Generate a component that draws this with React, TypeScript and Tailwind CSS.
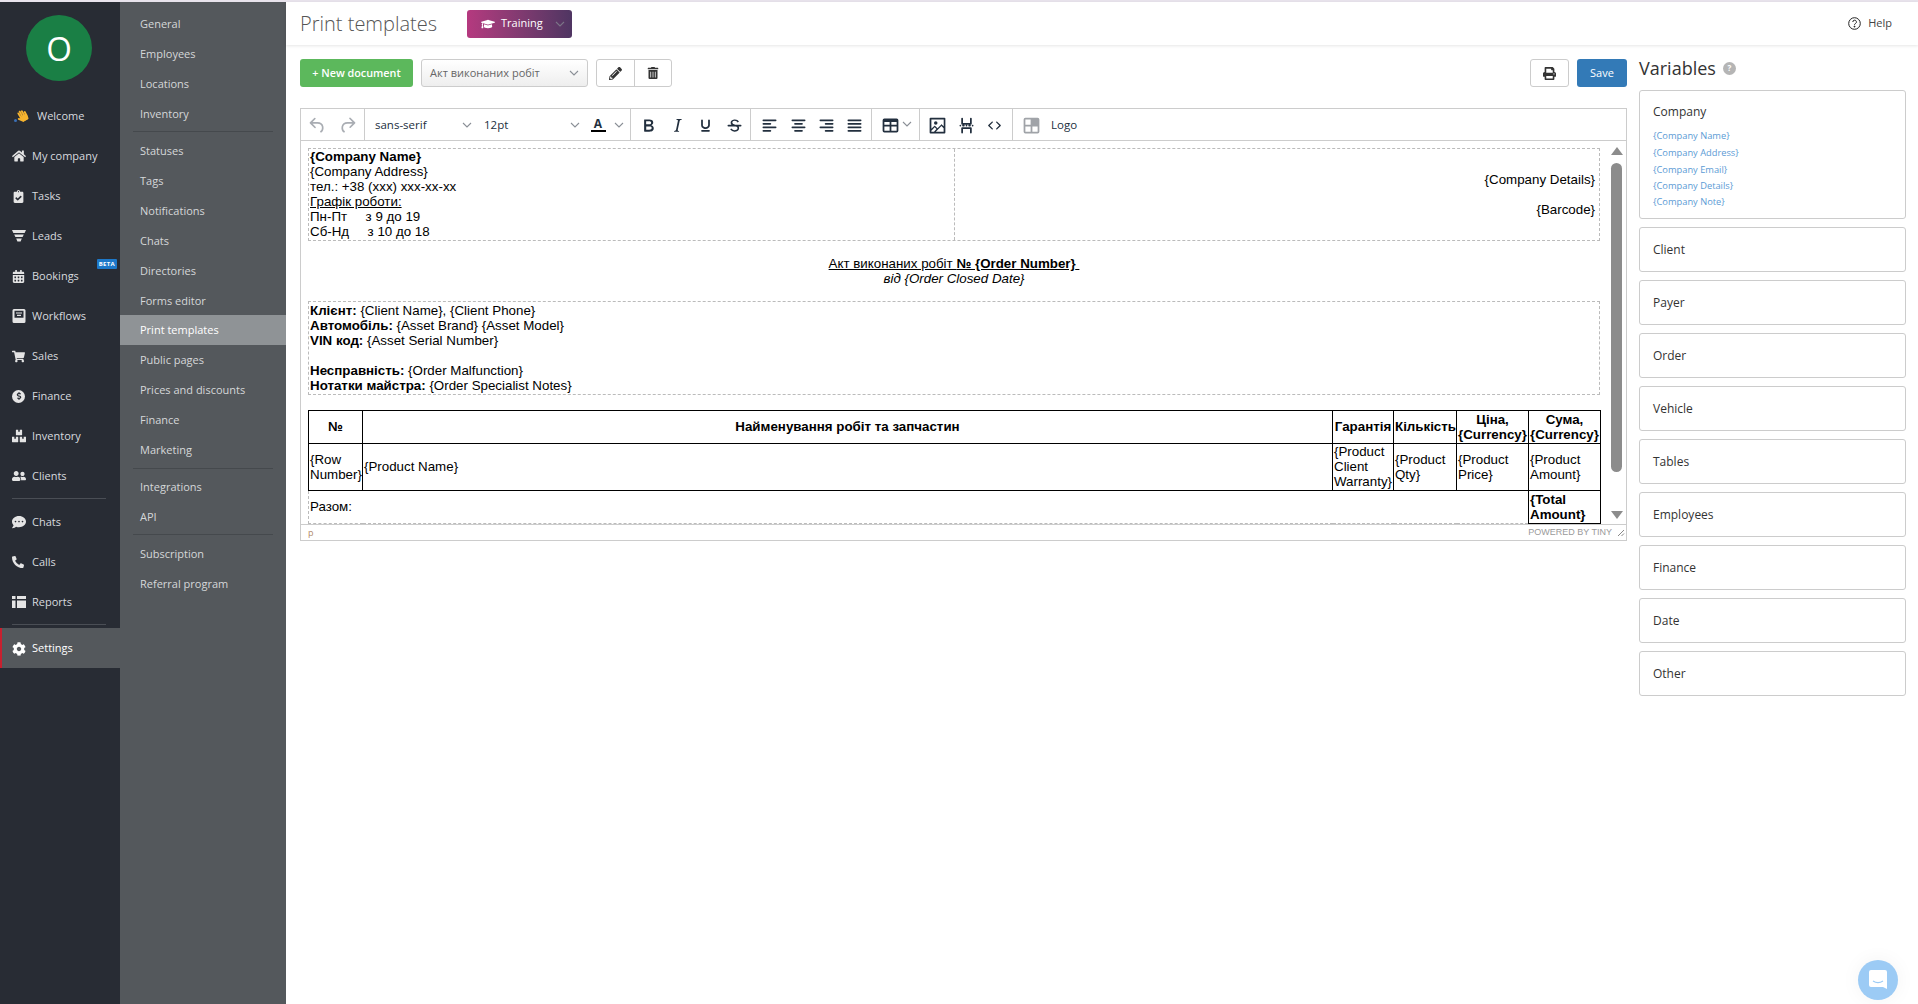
import React from "react";
import {
  FaHome, FaClipboardCheck, FaCalendarAlt, FaShoppingCart, FaDollarSign, FaBoxes, FaUserFriends,
  FaCommentDots, FaPhoneAlt, FaCog, FaPrint, FaPencilAlt, FaTrashAlt, FaGraduationCap, FaHandPaper,
} from "react-icons/fa";

const Funnel = () => (
  <svg width="14" height="14" viewBox="0 0 14 14" fill="currentColor"><path d="M0 1h14l-1.4 3H1.4zM2.2 5.6h9.6L10.6 8H3.4zM4.2 9.6h5.6L8.6 12.6H5.4z" /></svg>
);
const Workflow = () => (
  <svg width="14" height="14" viewBox="0 0 14 14" fill="currentColor"><path fillRule="evenodd" d="M2 0h10a1.5 1.5 0 0 1 1.5 1.5v11A1.5 1.5 0 0 1 12 14H2a1.5 1.5 0 0 1-1.5-1.5v-11A1.5 1.5 0 0 1 2 0zm.5 1.8v7h9v-7zM4 3.4h6v1.2H4zm1 2.3h4v1.2H5z" /></svg>
);
const Reports = () => (
  <svg width="14" height="14" viewBox="0 0 14 14" fill="currentColor"><path d="M0 1h3.5v3H0zM5 1h9v3H5zM0 5.5h3.5V13H0zM5 5.5h9V13H5z" /></svg>
);
const DollarCircle = () => (
  <span className="flex h-[13px] w-[13px] items-center justify-center rounded-full bg-[#e6e6e6] text-[#282c34]"><FaDollarSign size={8} /></span>
);

const mainNav: [string, React.ReactNode][] = [
  ["My company", <FaHome size={14} />],
  ["Tasks", <FaClipboardCheck size={13} />],
  ["Leads", <Funnel />],
  ["Bookings", <FaCalendarAlt size={13} />],
  ["Workflows", <Workflow />],
  ["Sales", <FaShoppingCart size={13} />],
  ["Finance", <DollarCircle />],
  ["Inventory", <FaBoxes size={14} />],
  ["Clients", <FaUserFriends size={14} />],
];

function MainRow({ label, icon, beta }: { label: string; icon: React.ReactNode; beta?: boolean }) {
  return (
    <div className="relative flex h-10 items-center pl-3 text-[#d7dadf]">
      <span className="flex w-[20px] shrink-0 items-center text-[#e4e4e4]">{icon}</span>
      <span>{label}</span>
      {beta && (
        <span className="absolute right-[3px] top-[3px] rounded-[1px] bg-[#1d78c9] px-[2px] text-[6px] font-bold leading-[10px] tracking-[0.3px] text-white">BETA</span>
      )}
    </div>
  );
}

function SubRow({ label, active }: { label: string; active?: boolean }) {
  return (
    <div className={active ? "-mt-px flex h-[30px] items-center bg-[#8f9396] pl-5 text-white" : "flex h-[30px] items-center pl-5 text-[#d5d7d9]"}>{label}</div>
  );
}
const SubDivider = ({ cls }: { cls: string }) => <div className={"mx-[13px] h-px bg-[#45494d] " + cls} />;

const I = ({ d, size = 21, cls = "text-[#222f3e]" }: { d: string; size?: number; cls?: string }) => (
  <svg width={size} height={size} viewBox="0 0 24 24" fill="currentColor" className={cls}><path d={d} /></svg>
);
const Chev = ({ cls = "" }: { cls?: string }) => (
  <svg width="10" height="10" viewBox="0 0 10 10" fill="none" stroke="#8a8f96" strokeWidth="1.1" className={cls}><path d="M1 3l4 4 4-4" /></svg>
);
const Sep = () => <div className="h-full w-px shrink-0 bg-[#ccc]" />;

const P = {
  undo: "M6.4 8H12c3.7 0 6.2 2 6.8 5.1.6 2.7-.4 5.6-2.3 6.8a1 1 0 0 1-1-1.8c1.1-.6 1.8-2.7 1.4-4.6-.5-2.1-2.1-3.5-4.9-3.5H6.4l3.3 3.3a1 1 0 1 1-1.4 1.4l-5-5a1 1 0 0 1 0-1.4l5-5a1 1 0 0 1 1.4 1.4L6.4 8z",
  redo: "M17.6 10H12c-2.8 0-4.4 1.4-4.9 3.5-.4 2 .3 4 1.4 4.6a1 1 0 1 1-1 1.8c-2-1.2-2.9-4.1-2.3-6.8.6-3 3-5.1 6.8-5.1h5.6l-3.3-3.3a1 1 0 1 1 1.4-1.4l5 5a1 1 0 0 1 0 1.4l-5 5a1 1 0 0 1-1.4-1.4l3.3-3.3z",
  bold: "M7.8 19c-.3 0-.5 0-.6-.2l-.2-.5V5.7c0-.2 0-.4.2-.5l.6-.2h5c1.5 0 2.7.3 3.5 1 .7.6 1.1 1.4 1.1 2.5a3 3 0 0 1-.6 1.9c-.4.6-1 1-1.6 1.2.4.1.9.3 1.3.6s.8.7 1 1.2c.4.4.5 1 .5 1.6 0 1.3-.4 2.3-1.3 3-.8.7-2.1 1-3.8 1H7.8zm5-8.3c.6 0 1.2-.1 1.6-.5.4-.3.6-.7.6-1.3 0-1.1-.8-1.7-2.3-1.7H9.3v3.5h3.4zm.5 6c.7 0 1.3-.1 1.7-.4.4-.4.6-.9.6-1.5s-.2-1-.7-1.4c-.4-.3-1-.4-2-.4H9.4v3.8h4z",
  italic: "M16.7 4.7l-.1.9h-.3c-.6 0-1 0-1.4.3-.3.3-.4.6-.5 1.1l-2.1 9.8v.6c0 .5.4.8 1.4.8h.2l-.2.8H8l.2-.8h.2c1.1 0 1.8-.5 2-1.5l2-9.8.1-.5c0-.6-.4-.8-1.4-.8h-.3l.2-.9h5.8z",
  underline: "M16 5c.6 0 1 .4 1 1v5.5a4 4 0 0 1-.4 1.8l-1 1.4a5.3 5.3 0 0 1-5.5 1 5 5 0 0 1-1.6-1c-.5-.4-.8-.9-1.1-1.4a4 4 0 0 1-.4-1.8V6c0-.6.4-1 1-1s1 .4 1 1v5.5c0 .3 0 .6.2 1l.6.7a3.3 3.3 0 0 0 2.2.8 3.4 3.4 0 0 0 2.2-.8c.3-.2.4-.5.6-.8l.2-.9V6c0-.6.4-1 1-1zM8 17h8c.6 0 1 .4 1 1s-.4 1-1 1H8a1 1 0 0 1 0-2z",
  strike: "M15.6 8.5c-.5-.7-1-1.1-1.3-1.3-.6-.4-1.3-.6-2-.6-2.7 0-2.8 1.7-2.8 2.1 0 1.6 1.8 2 3.2 2.3 4.4.9 4.6 2.8 4.6 3.9 0 1.4-.7 4.1-5 4.1A6.2 6.2 0 0 1 7 16.4l1.5-1.1c.4.6 1.6 2 3.7 2 1.6 0 2.5-.4 3-1.2.4-.8.3-2-.8-2.6-.7-.4-1.6-.7-2.9-1-1-.2-3.9-.8-3.9-3.6C7.6 6 10.3 5 12.4 5c2.9 0 4.2 1.6 4.7 2.4l-1.5 1.1zM5 11h14a1 1 0 0 1 0 2H5a1 1 0 0 1 0-2z",
  left: "M5 5h14c.6 0 1 .4 1 1s-.4 1-1 1H5a1 1 0 1 1 0-2zm0 4h8c.6 0 1 .4 1 1s-.4 1-1 1H5a1 1 0 1 1 0-2zm0 8h8c.6 0 1 .4 1 1s-.4 1-1 1H5a1 1 0 0 1 0-2zm0-4h14c.6 0 1 .4 1 1s-.4 1-1 1H5a1 1 0 0 1 0-2z",
  center: "M5 5h14c.6 0 1 .4 1 1s-.4 1-1 1H5a1 1 0 1 1 0-2zm3 4h8c.6 0 1 .4 1 1s-.4 1-1 1H8a1 1 0 1 1 0-2zm0 8h8c.6 0 1 .4 1 1s-.4 1-1 1H8a1 1 0 0 1 0-2zm-3-4h14c.6 0 1 .4 1 1s-.4 1-1 1H5a1 1 0 0 1 0-2z",
  right: "M5 5h14c.6 0 1 .4 1 1s-.4 1-1 1H5a1 1 0 1 1 0-2zm6 4h8c.6 0 1 .4 1 1s-.4 1-1 1h-8a1 1 0 0 1 0-2zm0 8h8c.6 0 1 .4 1 1s-.4 1-1 1h-8a1 1 0 0 1 0-2zm-6-4h14c.6 0 1 .4 1 1s-.4 1-1 1H5a1 1 0 0 1 0-2z",
  justify: "M5 5h14c.6 0 1 .4 1 1s-.4 1-1 1H5a1 1 0 1 1 0-2zm0 4h14c.6 0 1 .4 1 1s-.4 1-1 1H5a1 1 0 1 1 0-2zm0 4h14c.6 0 1 .4 1 1s-.4 1-1 1H5a1 1 0 0 1 0-2zm0 4h14c.6 0 1 .4 1 1s-.4 1-1 1H5a1 1 0 0 1 0-2z",
  table: "M19 4a2 2 0 0 1 2 2v12a2 2 0 0 1-2 2H5a2 2 0 0 1-2-2V6a2 2 0 0 1 2-2h14zm-8 9H5v5h6v-5zm8 0h-6v5h6v-5zM11 8H5v3h6V8zm8 0h-6v3h6V8z",
  image: "M5 15.7l3.3-3.2c.3-.3.7-.3 1 0L12 15l4.1-4c.3-.4.8-.4 1 0l2 1.9V5H5v10.7zM5 18V19h3l2.8-2.9-2-2L5 17.9zm14-3l-2.5-2.4-6.4 6.5H19v-4zM4 3h16c.6 0 1 .4 1 1v16c0 .6-.4 1-1 1H4a1 1 0 0 1-1-1V4c0-.6.4-1 1-1zm6 8a2 2 0 1 0 0-4 2 2 0 0 0 0 4z",
  pagebreak: "M5 11c.6 0 1 .4 1 1s-.4 1-1 1a1 1 0 0 1 0-2zm3 0h1c.6 0 1 .4 1 1s-.4 1-1 1H8a1 1 0 0 1 0-2zm4 0c.6 0 1 .4 1 1s-.4 1-1 1a1 1 0 0 1 0-2zm3 0h1c.6 0 1 .4 1 1s-.4 1-1 1h-1a1 1 0 0 1 0-2zm4 0c.6 0 1 .4 1 1s-.4 1-1 1a1 1 0 0 1 0-2zM7 3c.6 0 1 .4 1 1v5h8V4c0-.6.4-1 1-1s1 .4 1 1v6c0 .6-.4 1-1 1H7a1 1 0 0 1-1-1V4c0-.6.4-1 1-1zm0 11h10c.6 0 1 .4 1 1v5c0 .6-.4 1-1 1s-1-.4-1-1v-4H8v4c0 .6-.4 1-1 1s-1-.4-1-1v-5c0-.6.4-1 1-1z",
  code: "M9.8 15.7c.3.3.3.8 0 1-.3.4-.9.4-1.2 0l-4.4-4.1a.8.8 0 0 1 0-1.2l4.4-4.2c.3-.3.9-.3 1.2 0 .3.3.3.8 0 1.1L6 12l3.8 3.7zm4.4 0L18 12l-3.8-3.7a.8.8 0 0 1 0-1.1c.3-.3.9-.3 1.2 0l4.4 4.2c.3.3.3.9 0 1.2l-4.4 4.1c-.3.4-.9.4-1.2 0a.8.8 0 0 1 0-1z",
  tmpl: "M5 3h14a2 2 0 0 1 2 2v14a2 2 0 0 1-2 2H5a2 2 0 0 1-2-2V5a2 2 0 0 1 2-2zm0 2v6h6V5H5zm0 8v6h6v-6H5zm8 0v6h6v-6h-6z",
};

const Tool = ({ w, children }: { w: string; children: React.ReactNode }) => (
  <div className={"flex h-full shrink-0 items-center justify-center " + w}>{children}</div>
);

function EditorToolbar() {
  return (
    <div className="flex h-[32px] items-center border-b border-[#ccc] font-['Open_Sans',sans-serif] text-[11.5px] text-[#222f3e]">
      <div className="flex h-full w-[63px] shrink-0 items-center justify-center gap-[9px] pt-px">
        <I d={P.undo} cls="text-[#a9adb3]" />
        <I d={P.redo} cls="text-[#a9adb3]" />
      </div>
      <Sep />
      <div className="flex h-full w-[117px] shrink-0 items-center justify-between pl-[10px] pr-[10px] pt-px"><span>sans-serif</span><Chev /></div>
      <div className="flex h-full w-[98px] shrink-0 items-center justify-between pt-px"><span className="pl-[2px]">12pt</span><Chev /></div>
      <div className="flex h-full w-[50px] shrink-0 items-center pt-px">
        <span className="ml-[7px] flex w-[22px] flex-col items-center"><span className="text-[12px] font-bold leading-[11px]">A</span><span className="mt-px h-[2px] w-[15px] bg-black" /></span>
        <Chev cls="ml-[5px]" />
      </div>
      <Sep />
      <Tool w="w-[33px] pl-[2px] pt-px"><I d={P.bold} /></Tool>
      <Tool w="w-[27px] pt-px"><I d={P.italic} /></Tool>
      <Tool w="w-[29px] pt-px"><I d={P.underline} /></Tool>
      <Tool w="w-[28px] pt-px"><I d={P.strike} /></Tool>
      <div className="w-[2px]" />
      <Sep />
      <Tool w="w-[33px] pl-[3px] pt-px"><I d={P.left} /></Tool>
      <Tool w="w-[28px] pt-px"><I d={P.center} /></Tool>
      <Tool w="w-[28px] pt-px"><I d={P.right} /></Tool>
      <Tool w="w-[28px] pt-px"><I d={P.justify} /></Tool>
      <div className="w-[3px]" />
      <Sep />
      <div className="flex h-full w-[47px] shrink-0 items-center pl-[8px] pt-px"><I d={P.table} /><Chev cls="-mt-[3px] ml-[1px]" /></div>
      <Sep />
      <Tool w="w-[32px] pl-[2px] pt-px"><I d={P.image} /></Tool>
      <Tool w="w-[28px] pt-px"><I d={P.pagebreak} /></Tool>
      <Tool w="w-[29px] pt-px"><I d={P.code} size={19} /></Tool>
      <div className="w-[3px]" />
      <Sep />
      <Tool w="w-[36px] pt-px"><I d={P.tmpl} cls="text-[#a0a3a8]" /></Tool>
      <span className="ml-[2px] pt-px">Logo</span>
    </div>
  );
}

const cell = "border border-black px-px pb-px pt-0 align-middle";

function EditorBody() {
  return (
    <div className="h-[383px] flex-1 overflow-hidden pl-[7px] pt-[7px] font-['Liberation_Sans',Arial,sans-serif] text-[13.33px] leading-[15px] text-black">
      <div className="flex h-[93px] w-[1292px] border border-dashed border-[#bbb]">
        <div className="w-[646px] border-r border-dashed border-[#bbb] pl-px">
          <div className="font-bold">{"{Company Name}"}</div>
          <div>{"{Company Address}"}</div>
          <div>тел.: +38 (xxx) xxx-xx-xx</div>
          <div className="underline">Графік роботи:</div>
          <div>Пн-Пт &nbsp;&nbsp;&nbsp;&nbsp;з 9 до 19</div>
          <div>Сб-Нд &nbsp;&nbsp;&nbsp;&nbsp;з 10 до 18</div>
        </div>
        <div className="flex flex-1 flex-col items-end pr-1 pt-[23px]">
          <div>{"{Company Details}"}</div>
          <div className="mt-[15px]">{"{Barcode}"}</div>
        </div>
      </div>
      <div className="w-[1292px] pt-[15px] text-center">
        <div className="underline">Акт виконаних робіт <b>№ {"{Order Number}"}</b>&nbsp;</div>
        <div className="italic">від {"{Order Closed Date}"}</div>
      </div>
      <div className="mt-[15px] h-[94px] w-[1292px] border border-dashed border-[#bbb] py-px pl-px">
        <div><b>Клієнт:</b> {"{Client Name}, {Client Phone}"}</div>
        <div><b>Автомобіль:</b> {"{Asset Brand} {Asset Model}"}</div>
        <div><b>VIN код:</b> {"{Asset Serial Number}"}</div>
        <div className="h-[15px]" />
        <div><b>Несправність:</b> {"{Order Malfunction}"}</div>
        <div><b>Нотатки майстра:</b> {"{Order Specialist Notes}"}</div>
      </div>
      <table className="mt-[15px] w-[1292px] table-fixed border-collapse">
        <colgroup>
          <col className="w-[54px]" /><col className="w-[970px]" /><col className="w-[61px]" /><col className="w-[63px]" /><col className="w-[72px]" /><col className="w-[72px]" />
        </colgroup>
        <tbody>
          <tr className="h-[33px] text-center font-bold">
            <td className={cell}>№</td>
            <td className={cell}>Найменування робіт та запчастин</td>
            <td className={cell}>Гарантія</td>
            <td className={cell + " whitespace-nowrap"}>Кількість</td>
            <td className={cell}>Ціна, {"{Currency}"}</td>
            <td className={cell}>Сума, {"{Currency}"}</td>
          </tr>
          <tr className="h-[47px]">
            <td className={cell}>{"{Row Number}"}</td>
            <td className={cell}>{"{Product Name}"}</td>
            <td className={cell}>{"{Product Client Warranty}"}</td>
            <td className={cell}>{"{Product Qty}"}</td>
            <td className={cell}>{"{Product Price}"}</td>
            <td className={cell}>{"{Product Amount}"}</td>
          </tr>
          <tr className="h-[33px]">
            <td colSpan={5} className="border-x border-b border-dashed border-x-[#bbb] border-b-[#bbb] px-px pb-px pt-0 align-middle">Разом:</td>
            <td className={cell + " font-bold"}>{"{Total Amount}"}</td>
          </tr>
        </tbody>
      </table>
    </div>
  );
}

function Scrollbar() {
  return (
    <div className="flex w-[16px] shrink-0 flex-col items-center pr-[3px] pt-[6px]">
      <div className="h-0 w-0 border-x-[6px] border-b-[8px] border-x-transparent border-b-[#8c8c8c]" />
      <div className="mt-[8px] h-[309px] w-[11px] shrink-0 rounded-[6px] bg-[#8c8c8c]" />
      <div className="mt-[39px] h-0 w-0 border-x-[6px] border-t-[8px] border-x-transparent border-t-[#8c8c8c]" />
    </div>
  );
}

const sections = ["Client", "Payer", "Order", "Vehicle", "Tables", "Employees", "Finance", "Date", "Other"];
const vars = [
  ["{Company Name}", "h-[16px]"],
  ["{Company Address}", "h-[17px]"],
  ["{Company Email}", "h-[17px]"],
  ["{Company Details}", "h-[16px]"],
  ["{Company Note}", "h-[16px]"],
];

export default function App() {
  return (
    <div className="relative flex h-screen w-full flex-col overflow-hidden bg-white font-['Open_Sans',sans-serif] text-[11px] text-[#333]">
      <div className="h-[2px] shrink-0 bg-[#e8e3ec]" />
      <div className="flex min-h-0 flex-1">
        <aside className="flex w-[120px] shrink-0 flex-col bg-[#282c34]">
          <div className="mb-[15px] ml-[26px] mt-[13px] flex h-[66px] w-[66px] items-center justify-center rounded-full bg-[#1a7f45] text-[33px] leading-none text-white">O</div>
          <div className="flex h-10 items-center pl-[15px] text-[#d7dadf]">
            <span className="relative mr-[9px] flex w-[13px] justify-center text-[#f5b32e]"><FaHandPaper size={12} className="-rotate-[30deg]" /><span className="absolute -left-px bottom-0 h-[3px] w-[3px] rounded-full bg-[#3b6fb5]" /></span>
            Welcome
          </div>
          {mainNav.map(([l, ic]) => <MainRow key={l} label={l} icon={ic} beta={l === "Bookings"} />)}
          <div className="mx-3 mb-[3px] mt-[2px] h-px w-[94px] bg-[#4a4e55]" />
          <MainRow label="Chats" icon={<FaCommentDots size={14} />} />
          <MainRow label="Calls" icon={<FaPhoneAlt size={12} />} />
          <MainRow label="Reports" icon={<Reports />} />
          <div className="mx-3 mb-[3px] mt-[2px] h-px w-[94px] bg-[#4a4e55]" />
          <div className="flex h-10 items-center border-l-2 border-[#c8202f] bg-[#54585c] pl-[10px] pt-px text-white">
            <span className="flex w-[20px] shrink-0 text-white"><FaCog size={14} /></span>Settings
          </div>
        </aside>
        <nav className="w-[166px] shrink-0 bg-[#54585c] pt-[7px]">
          {["General", "Employees", "Locations", "Inventory"].map((l) => <SubRow key={l} label={l} />)}
          <SubDivider cls="mb-[4px] mt-[2px]" />
          {["Statuses", "Tags", "Notifications", "Chats", "Directories", "Forms editor"].map((l) => <SubRow key={l} label={l} />)}
          <SubRow label="Print templates" active />
          {["Public pages", "Prices and discounts", "Finance", "Marketing"].map((l) => <SubRow key={l} label={l} />)}
          <SubDivider cls="my-[3px]" />
          {["Integrations", "API"].map((l) => <SubRow key={l} label={l} />)}
          <SubDivider cls="mb-[4px] mt-[2px]" />
          {["Subscription", "Referral program"].map((l) => <SubRow key={l} label={l} />)}
        </nav>
        <main className="flex min-w-0 flex-1 flex-col">
          <header className="flex h-[43px] shrink-0 items-center pl-[14px] pr-[26px] shadow-[0_1px_3px_rgba(0,0,0,0.1)]">
            <h1 className="w-[167px] text-[20px] font-light leading-none text-[#555]">Print templates</h1>
            <div className="flex h-[28px] w-[105px] items-center rounded-[3px] bg-gradient-to-r from-[#b5397f] to-[#4f3562] pl-[14px] text-[11px] font-medium text-white">
              <FaGraduationCap size={14} />
              <span className="ml-[6px]">Training</span>
              <Chev cls="ml-[12px] opacity-70" />
            </div>
            <div className="ml-auto flex items-center gap-[7px] text-[#444]">
              <svg width="13" height="13" viewBox="0 0 13 13" fill="none" stroke="#222" strokeWidth="1"><circle cx="6.5" cy="6.5" r="5.8" /><path d="M4.8 5a1.8 1.8 0 1 1 2.6 1.6c-.6.3-.9.6-.9 1.2" /><circle cx="6.5" cy="9.6" r=".5" fill="#222" /></svg>
              Help
            </div>
          </header>
          <div className="flex min-h-0 flex-1 gap-3 pl-[14px] pr-[12px]">
            <div className="w-[1327px] shrink-0 pt-[14px]">
              <div className="flex h-[28px] items-stretch">
                <div className="flex w-[113px] items-center justify-center rounded-[3px] bg-[#5cb85c] text-[10.8px] font-semibold text-white">+ New document</div>
                <div className="ml-2 flex w-[167px] items-center justify-between rounded-[3px] border border-[#ccc] bg-gradient-to-b from-white to-[#eeeeee] pl-2 pr-2 text-[11px] text-[#666]">
                  Акт виконаних робіт<Chev />
                </div>
                <div className="ml-2 flex w-[76px] rounded-[3px] border border-[#ccc] text-[#333]">
                  <div className="flex flex-1 items-center justify-center border-r border-[#ccc]"><FaPencilAlt size={13} /></div>
                  <div className="flex flex-1 items-center justify-center"><FaTrashAlt size={12} /></div>
                </div>
                <div className="ml-auto flex w-[39px] items-center justify-center rounded-[3px] border border-[#ccc] text-[#333]"><FaPrint size={13} /></div>
                <div className="ml-2 flex w-[50px] items-center justify-center rounded-[3px] bg-[#337ab7] text-white">Save</div>
              </div>
              <div className="mt-[21px] flex h-[433px] flex-col border border-[#ccc]">
                <EditorToolbar />
                <div className="flex min-h-0 flex-1">
                  <EditorBody />
                  <Scrollbar />
                </div>
                <div className="flex h-[16px] shrink-0 items-center justify-between border-t border-[#ccc] pl-[7px] pr-[1px] pt-px text-[9px] text-[#9a9a9a]">
                  <span className="text-[#b08a6a]">p</span>
                  <div className="flex items-center gap-[5px]">
                    <span className="font-['Liberation_Sans',sans-serif] text-[9px]">POWERED BY TINY</span>
                    <svg width="8" height="8" viewBox="0 0 8 8" stroke="#888" strokeWidth="1"><path d="M7 1L1 7M7 4.5L4.5 7" /></svg>
                  </div>
                </div>
              </div>
            </div>
            <div className="w-[267px] shrink-0 pt-[1px]">
              <div className="flex h-[44px] items-center gap-[7px] text-[18px] leading-none text-[#333]">
                Variables
                <span className="flex h-[13px] w-[13px] items-center justify-center rounded-full bg-[#b5b5b5] text-[8px] font-bold text-white">?</span>
              </div>
              <div className="h-[129px] rounded-[3px] border border-[#ccc] px-[13px] pt-[12px]">
                <div className="text-[12px] leading-[18px]">Company</div>
                <div className="mt-[7px] text-[9.3px] text-[#5b9bd5]">
                  {vars.map(([v, h]) => <div key={v} className={"flex items-center " + h}>{v}</div>)}
                </div>
              </div>
              <div className="mt-2 flex flex-col gap-2">
                {sections.map((s) => (
                  <div key={s} className="flex h-[45px] items-center rounded-[3px] border border-[#ccc] pl-[13px] text-[12px]">{s}</div>
                ))}
              </div>
            </div>
          </div>
        </main>
      </div>
      <div className="absolute bottom-[4px] right-[20px] flex h-10 w-10 items-center justify-center rounded-full bg-[#9ccbf5] shadow-[0_0_20px_rgba(0,0,0,0.05)]">
        <svg width="18" height="20" viewBox="0 0 18 20" fill="white"><path d="M2 0h14a2 2 0 0 1 2 2v17l-4-2H2a2 2 0 0 1-2-2V2a2 2 0 0 1 2-2z" /><path d="M4 11c3 2 7 2 10 0" fill="none" stroke="#9ccbf5" strokeWidth="1.2" /></svg>
      </div>
    </div>
  );
}
